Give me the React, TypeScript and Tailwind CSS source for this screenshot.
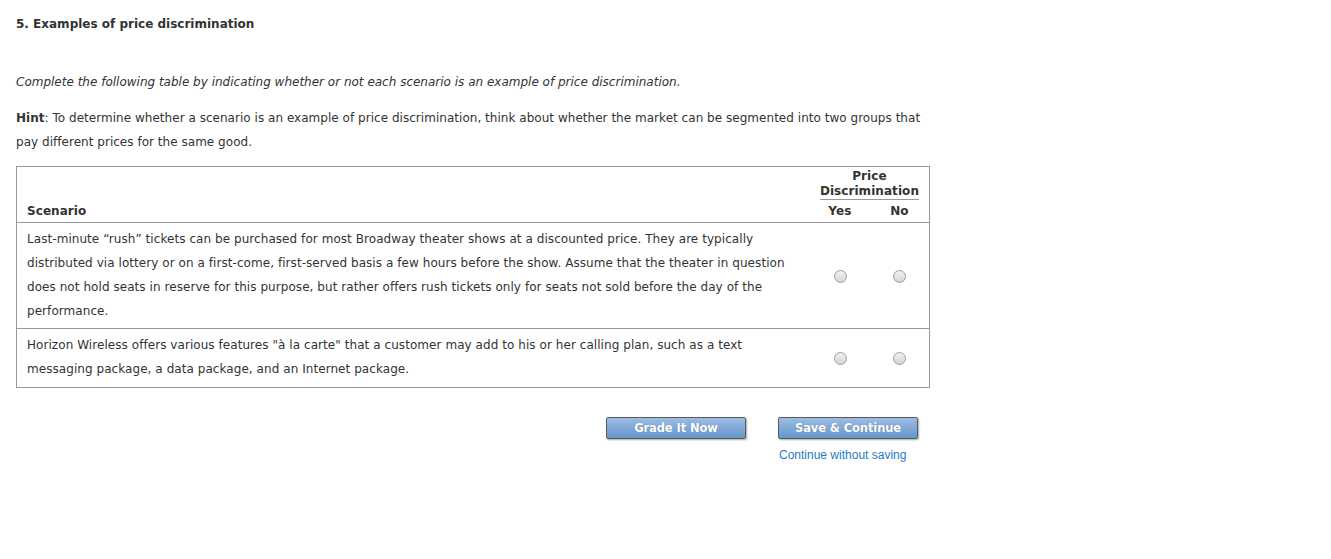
import React from "react";

const font = { fontFamily: "Verdana, 'DejaVu Sans', sans-serif" };

function Radio() {
  return (
    <span className="inline-block w-[13px] h-[13px] rounded-full border border-[#a0a0a0] bg-gradient-to-b from-[#f2f2f2] to-[#d4d4d4] align-middle" />
  );
}

function Btn({ label }: { label: string }) {
  return (
    <button className="w-[140px] h-[22px] pt-[1px] border border-[#5a5a5a] rounded-[2px] bg-gradient-to-b from-[#9dbde3] to-[#6496cb] text-white font-bold text-[11.5px] tracking-[-0.1px] shadow-[1px_1px_2px_rgba(0,0,0,0.35)] [text-shadow:0_0_1px_rgba(0,0,0,0.3)]">
      {label}
    </button>
  );
}

export default function App() {
  return (
    <div className="w-[1331px] h-[559px] bg-white text-[#333] text-[12px]" style={font}>
      <div className="pl-[16px] pt-[16px]">
        <h1 className="text-[12px] font-bold leading-[16px] text-[#333]">5. Examples of price discrimination</h1>
        <p className="italic mt-[42px] leading-[16px]">
          Complete the following table by indicating whether or not each scenario is an example of price discrimination.
        </p>
        <p className="mt-[16px] leading-[24px] tracking-[0.03px]">
          <b>Hint</b>: To determine whether a scenario is an example of price discrimination, think about whether the market can be segmented into two groups that
          <br />
          pay different prices for the same good.
        </p>
        <table className="mt-[12px] w-[914px] border border-[#999] border-collapse tracking-[0.06px]">
          <thead>
            <tr className="border-b border-[#999]">
              <th className="text-left align-bottom pl-[10px] pb-[3px] font-bold leading-[16px]">Scenario</th>
              <th colSpan={2} className="w-[119px] p-0 pt-[2px] pb-[3px] font-bold">
                <div className="mx-[10px] leading-[15px] border-b border-[#999] text-center">
                  Price
                  <br />
                  Discrimination
                </div>
                <div className="flex leading-[16px] mt-[3px]">
                  <span className="w-[60px] text-center">Yes</span>
                  <span className="w-[59px] text-center">No</span>
                </div>
              </th>
            </tr>
          </thead>
          <tbody>
            <tr className="border-b border-[#999]">
              <td className="pl-[10px] pt-[4px] pb-[5px] leading-[24px]">
                Last-minute “rush” tickets can be purchased for most Broadway theater shows at a discounted price. They are typically
                <br />
                distributed via lottery or on a first-come, first-served basis a few hours before the show. Assume that the theater in question
                <br />
                does not hold seats in reserve for this purpose, but rather offers rush tickets only for seats not sold before the day of the
                <br />
                performance.
              </td>
              <td className="w-[60px] text-center align-middle">
                <Radio />
              </td>
              <td className="w-[59px] text-center align-middle">
                <Radio />
              </td>
            </tr>
            <tr>
              <td className="pl-[10px] pt-[4px] pb-[6px] leading-[24px]">
                Horizon Wireless offers various features "à la carte" that a customer may add to his or her calling plan, such as a text
                <br />
                messaging package, a data package, and an Internet package.
              </td>
              <td className="text-center align-middle">
                <Radio />
              </td>
              <td className="text-center align-middle">
                <Radio />
              </td>
            </tr>
          </tbody>
        </table>
        <div className="flex justify-start pl-[590px] mt-[29px] gap-[32px]">
          <Btn label="Grade It Now" />
          <div className="flex flex-col items-start">
            <Btn label="Save & Continue" />
            <a
              className="mt-[9px] ml-[1px] text-[12px] leading-[14px] text-[#1f7bc6]"
              style={{ fontFamily: "Arial, 'Liberation Sans', sans-serif" }}
            >
              Continue without saving
            </a>
          </div>
        </div>
      </div>
    </div>
  );
}
